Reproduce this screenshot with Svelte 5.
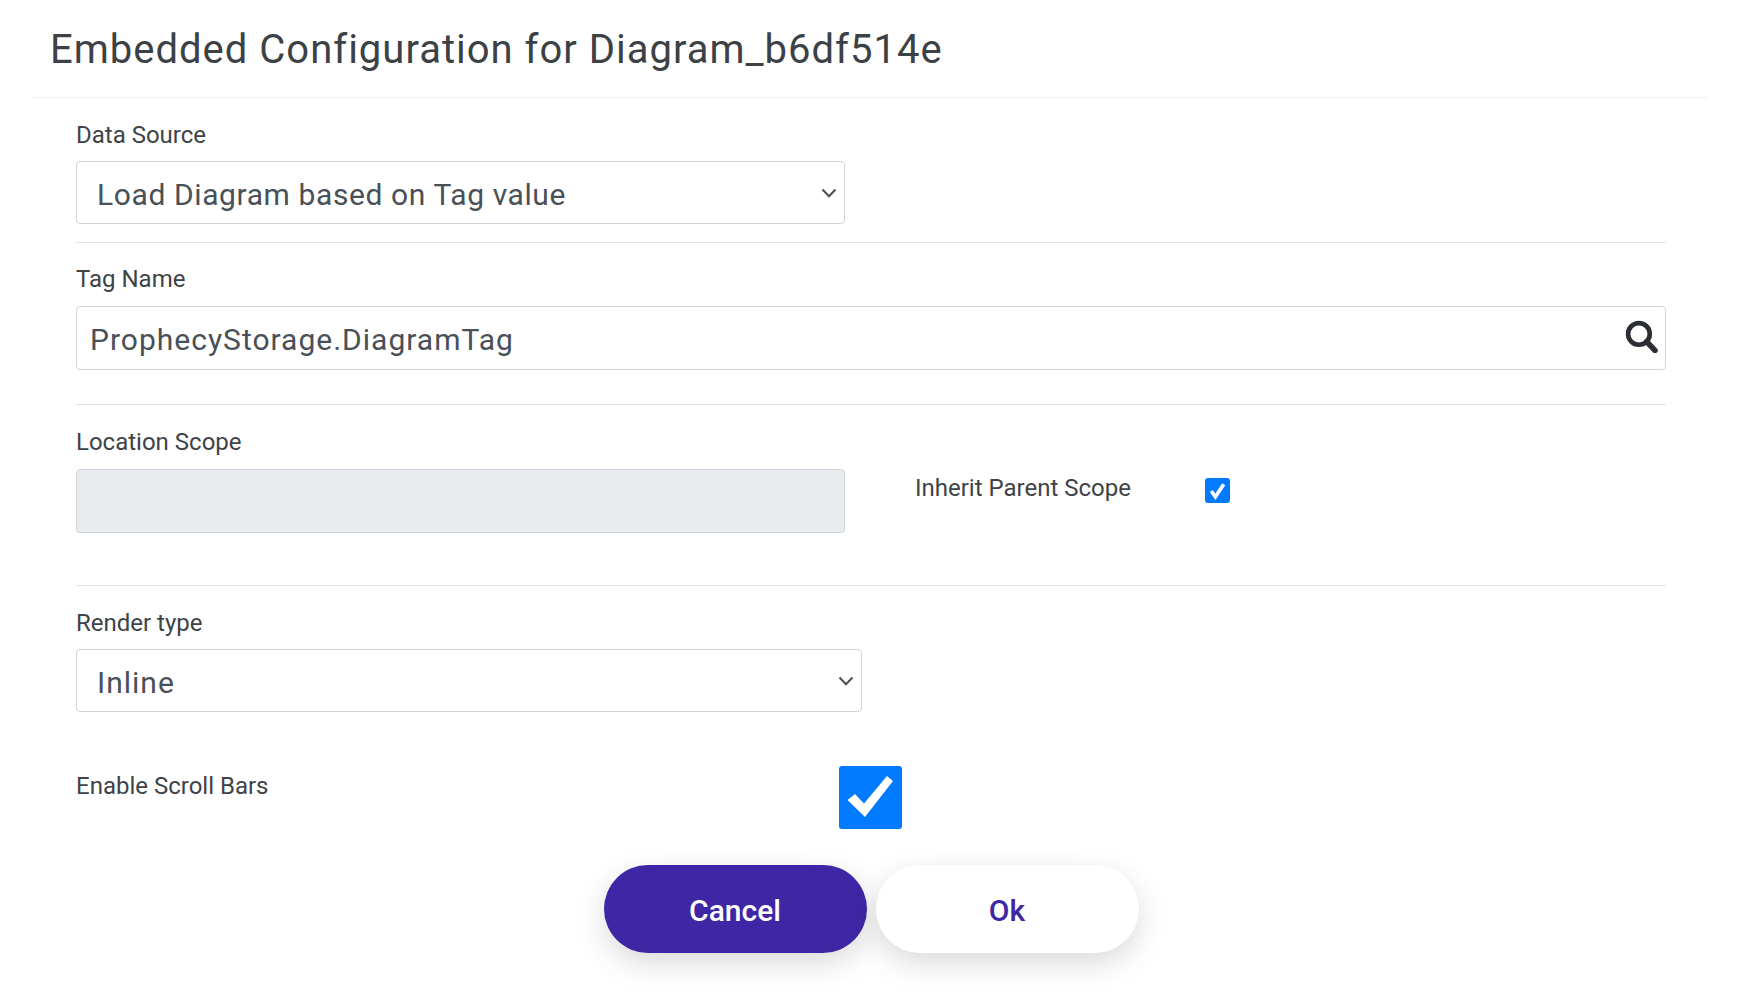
<script lang="ts">
  const title = "Embedded Configuration for Diagram_b6df514e";
</script>

<div class="dialog">
  <header class="head">
    <h1>{title}</h1>
  </header>

  <form class="body" on:submit|preventDefault>
    <section class="group first">
      <label class="lbl" for="source">Data Source</label>
      <div class="select narrow">
        <select id="source">
          <option>Load Diagram based on Tag value</option>
        </select>
        <svg class="chev" viewBox="0 0 16 10"><path d="M1.5 1.5 8 8.2l6.500-6.700" /></svg>
      </div>
    </section>

    <section class="group tag">
      <label class="lbl" for="tag">Tag Name</label>
      <div class="search">
        <input id="tag" class="field" value="ProphecyStorage.DiagramTag" />
        <svg class="glass" viewBox="0 0 32 32">
          <circle cx="13.500" cy="13.500" r="10.500" />
          <path d="M21 21l8 8.500" />
        </svg>
      </div>
    </section>

    <section class="group scope">
      <div class="scope-main">
        <label class="lbl" for="loc">Location Scope</label>
        <input id="loc" class="field readonly" disabled />
      </div>
      <div class="inherit">
        <span class="lbl">Inherit Parent Scope</span>
        <span class="check small">
          <svg viewBox="0 0 24 24"><path d="M6 12.500l4 5.500 8-12" /></svg>
        </span>
      </div>
    </section>

    <section class="group render">
      <label class="lbl" for="render">Render type</label>
      <div class="select wide">
        <select id="render">
          <option>Inline</option>
        </select>
        <svg class="chev" viewBox="0 0 16 10"><path d="M1.5 1.5 8 8.2l6.500-6.700" /></svg>
      </div>
      <div class="scrollbars">
        <span class="lbl">Enable Scroll Bars</span>
        <span class="check big">
          <svg viewBox="0 0 63 63"><path d="M8.500 34 16 28l9 9.500L48 10l6 5-28 36z" /></svg>
        </span>
      </div>
    </section>

    <div class="actions">
      <button type="button" class="btn cancel">Cancel</button>
      <button type="submit" class="btn ok">Ok</button>
    </div>
  </form>
</div>

<style>
  :global(body) {
    margin: 0;
    background: #fff;
  }

  .dialog {
    width: 1744px;
    height: 1002px;
    box-sizing: border-box;
    padding: 0 27px 0 32px;
    font-family: Roboto, "Liberation Sans", sans-serif;
    color: #3c4145;
    overflow: hidden;
  }

  .head {
    height: 97px;
    margin-right: 10px;
    padding: 0 0 0 19px;
    border-bottom: 1px solid #eef0f1;
    box-sizing: content-box;
  }

  h1 {
    margin: 0;
    padding-top: 24px;
    font-size: 40px;
    line-height: 52px;
    font-weight: 400;
    letter-spacing: 1px;
    margin-left: -1px;
  }

  .body {
    padding: 0 51px 0 44px;
  }

  .group {
    border-bottom: 1px solid #dee2e6;
  }

  .first {
    height: 145px;
    padding-top: 23px;
    box-sizing: border-box;
  }

  .tag {
    height: 162px;
    padding-top: 22px;
    box-sizing: border-box;
  }

  .scope {
    height: 181px;
    padding-top: 23px;
    box-sizing: border-box;
    display: flex;
  }

  .render {
    border-bottom: 0;
    padding-top: 23px;
  }

  .lbl {
    display: block;
    font-size: 24px;
    line-height: 28px;
    margin-bottom: 12px;
    color: #3e4347;
  }

  .tag .lbl {
    margin-bottom: 13px;
  }

  .scope-main .lbl {
    margin-bottom: 13px;
  }

  .select {
    position: relative;
    height: 63px;
  }

  .narrow {
    width: 769px;
  }

  .wide {
    width: 786px;
  }

  select,
  .field {
    display: block;
    width: 100%;
    height: 100%;
    box-sizing: border-box;
    border: 1px solid #ced4da;
    border-radius: 4px;
    background: #fff;
    font-family: inherit;
    font-size: 30px;
    color: #495057;
    letter-spacing: 1px;
    margin: 0;
    outline: none;
  }

  select {
    appearance: none;
    padding: 3px 40px 0 20px;
    letter-spacing: 0.6px;
  }

  .wide select {
    letter-spacing: 1px;
  }

  .chev {
    position: absolute;
    right: 8px;
    top: 27px;
    width: 16px;
    height: 10px;
    fill: none;
    stroke: #4a4f54;
    stroke-width: 2;
  }

  .search {
    position: relative;
    height: 64px;
  }

  .field {
    padding: 2px 50px 0 13px;
  }

  .glass {
    position: absolute;
    right: 8px;
    top: 14px;
    width: 33px;
    height: 33px;
    fill: none;
    stroke: #2b2f33;
    stroke-width: 4.500;
  }

  .glass path {
    stroke-width: 5.500;
    stroke-linecap: round;
  }

  .scope-main {
    width: 769px;
  }

  .readonly {
    height: 64px;
    background: #e9ecef;
  }

  .inherit {
    display: flex;
    align-items: flex-start;
    margin: 46px 0 0 70px;
  }

  .inherit .lbl {
    width: 290px;
  }

  .check {
    display: block;
    background: #007bff;
    border-radius: 3px;
  }

  .check svg {
    display: block;
    width: 100%;
    height: 100%;
    fill: none;
    stroke: #fff;
  }

  .small {
    width: 25px;
    height: 25px;
    margin-top: 4px;
  }

  .small svg {
    stroke-width: 3.500;
  }

  .big {
    width: 63px;
    height: 63px;
  }

  .big svg {
    fill: #fff;
    stroke: none;
  }

  .scrollbars {
    display: flex;
    margin-top: 54px;
  }

  .scrollbars .lbl {
    width: 763px;
    margin: 6px 0 0;
  }

  .actions {
    display: flex;
    justify-content: center;
    gap: 9px;
    margin-top: 36px;
  }

  .btn {
    width: 263px;
    height: 88px;
    border: 0;
    border-radius: 44px;
    padding: 2px 0 0;
    font-family: inherit;
    font-size: 30px;
    font-weight: 500;
    box-shadow: 0 10px 30px rgba(0, 0, 0, 0.15);
  }

  .cancel {
    background: #3f26a4;
    color: #fff;
  }

  .ok {
    background: #fff;
    color: #3f26a4;
  }
</style>
